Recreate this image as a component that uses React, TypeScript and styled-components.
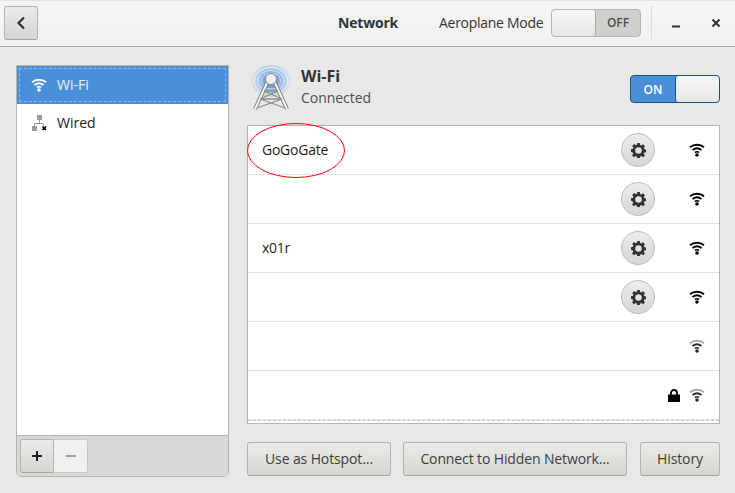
import React from "react";
import styled, { createGlobalStyle } from "styled-components";

const Global = createGlobalStyle`
  html, body { margin: 0; padding: 0; background: #e8e8e7; }
  body { font-family: "Open Sans", "Noto Sans", sans-serif; font-size: 14px; color: #2e3436; }
  * { box-sizing: border-box; }
`;

const Win = styled.div`
  width: 735px; height: 493px; display: flex; flex-direction: column; background: #e8e8e7; overflow: hidden;
`;
const Header = styled.header`
  height: 47px; display: flex; align-items: center; padding: 0 0 0 4px;
  background: linear-gradient(#f5f5f5, #f1f1f1); border-top: 1px solid #e4e4e4; border-bottom: 1px solid #a5a6a0;
`;
const BtnBase = styled.button`
  font-family: inherit; color: #2e3436; border: 1px solid #b4b5b0; border-bottom-color: #a2a39e;
  background: linear-gradient(#ebebe9, #d5d5d2); border-radius: 3px; padding: 0;
  display: flex; align-items: center; justify-content: center;
`;
const BackBtn = styled(BtnBase)` width: 34px; height: 34px; margin-top: -1px; `;
const Title = styled.div`
  font-weight: 700; font-size: 14px; letter-spacing: -0.2px; color: #2e3436; margin-left: 300px; width: 60px; text-align: left; padding-bottom: 2px;
`;
const PlaneLabel = styled.div` margin-left: 41px; width: 112px; font-size: 14px; letter-spacing: -.28px; white-space: nowrap; padding-bottom: 2px; `;
const Switch = styled.div<{ $on?: boolean }>`
  width: 90px; height: 28px; display: flex; border-radius: 4px; overflow: hidden; flex-shrink: 0;
  flex-direction: ${p => (p.$on ? "row" : "row-reverse")};
  border: 1px solid ${p => (p.$on ? "#1c4f86" : "#b6b6b2")};
  background: ${p => (p.$on ? "#4a90d9" : "#cfcfcc")};
`;
const PlaneSwitch = styled.div` margin-top: -2px; `;
const SwitchText = styled.div<{ $on?: boolean }>`
  width: 44px; display: flex; align-items: center; justify-content: center; font-size: 12px; font-weight: 600;
  color: ${p => (p.$on ? "#fff" : "#4c4f50")};
`;
const Knob = styled.div<{ $on?: boolean }>`
  flex: 1; background: linear-gradient(#f6f6f5, #e6e6e4); border-radius: 3px;
  border-${p => (p.$on ? "left" : "right")}: 1px solid ${p => (p.$on ? "#1c4f86" : "#a9a9a5")};
`;
const Sep = styled.div` width: 1px; height: 34px; background: #dcdcda; margin: -2px 0 0 10px; `;
const WinBtn = styled.div<{ $w: number }>`
  width: ${p => p.$w}px; display: flex; justify-content: center; align-items: center; height: 30px; margin-top: -2px;
`;

const Body = styled.main`
  flex: 1; display: flex; gap: 18px; padding: 18px 15px 16px 16px; min-height: 0;
`;
const Side = styled.aside`
  width: 213px; display: flex; flex-direction: column; border: 1px solid #b4b5b0; border-radius: 0 0 5px 5px; background: #fff;
  overflow: hidden;
`;
const SideList = styled.div` flex: 1; `;
const SideRow = styled.div<{ $sel?: boolean }>`
  height: 38px; display: flex; align-items: center; gap: 9px; padding: 0 0 1px 14px; font-size: 14px; position: relative;
  background: ${p => (p.$sel ? "#4a90d9" : "#fff")}; color: ${p => (p.$sel ? "#e8f1fb" : "#1c1f20")};
  ${p => p.$sel && `&::after { content: ""; position: absolute; inset: 2px; border: 1px dashed #8cb9e8; }`}
`;
const SideIcon = styled.span` width: 17px; height: 16px; display: flex; `;
const SideFooter = styled.div`
  height: 41px; background: #d8d8d6; border-top: 1px solid #b4b5b0; padding: 3px; display: flex;
`;
const AddBtn = styled(BtnBase)`
  width: 34px; height: 34px; border-radius: 3px 0 0 3px; font-size: 0;
`;
const RemoveBtn = styled(AddBtn)`
  border-left: none; border-radius: 0 3px 3px 0; background: #f0f0ef; border-color: #c6c6c3;
`;

const Main = styled.section` width: 473px; display: flex; flex-direction: column; `;
const Head = styled.div` height: 60px; display: flex; align-items: flex-start; padding-left: 3px; `;
const HeadText = styled.div` margin-left: 9px; display: flex; flex-direction: column; `;
const HeadTitle = styled.div` font-weight: 700; font-size: 16px; line-height: 22px; color: #2e3436; `;
const HeadSub = styled.div` font-size: 14px; line-height: 22px; color: #4a4f50; letter-spacing: -.03px; `;
const HeadSwitch = styled.div` margin-left: auto; margin-top: 10px; `;
const ListWrap = styled.div`
  position: relative; height: 299px; border: 1px solid #b4b5b0; background: #fff; overflow: hidden;
`;
const Row = styled.div`
  height: 49px; display: flex; align-items: center; border-bottom: 1px solid #e2e2e0; padding-left: 14px; font-size: 14px; color: #1c1f20;
`;
const RowName = styled.div` flex: 1; letter-spacing: -.25px; padding-bottom: 2px; `;
const GearBtn = styled.div`
  width: 34px; height: 34px; border-radius: 50%; border: 1px solid #bdbdb9; background: linear-gradient(#ececea, #d6d6d3);
  display: flex; align-items: center; justify-content: center; margin-right: 34px;
`;
const Lock = styled.div` margin-right: 9px; display: flex; `;
const Signal = styled.div` width: 16px; margin-right: 14px; display: flex; margin-top: -1px; `;
const Dashes = styled.div` position: absolute; left: 0; right: 0; bottom: 2px; height: 0; border-bottom: 1px dashed #c4c4c1; `;
const Foot = styled.div` display: flex; margin-top: 18px; `;
const FootBtn = styled(BtnBase)<{ $w: number; $ml?: number }>`
  width: ${p => p.$w}px; height: 34px; margin-left: ${p => p.$ml ?? 0}px; font-size: 14px; letter-spacing: -.12px; color: #3b3f40; padding-bottom: 2px;
`;
const Ellipse = styled.svg` position: absolute; left: 247px; top: 123px; `;

const Wifi = ({ c = "#000", weak = false }: { c?: string; weak?: boolean }) => (
  <svg width="16" height="16" viewBox="0 0 16 16" fill="none">
    <path d="M1 5.2C5 1.9 11 1.9 15 5.2" stroke={weak ? "#aaa" : c} strokeWidth="1.8" />
    <path d="M3.5 8C6.2 5.9 9.8 5.9 12.5 8" stroke={c} strokeWidth="1.8" />
    <path d="M5.8 10.4C7.2 9.5 8.8 9.5 10.2 10.4" stroke={c} strokeWidth="1.6" />
    <circle cx="8" cy="13" r="1.8" fill={c} />
  </svg>
);
const Gear = () => (
  <svg width="15" height="15" viewBox="0 0 16 16">
    <path fill="#2e3436" fillRule="evenodd" d="M6.6 0h2.8l.4 2.2 1.3.5 1.8-1.3 2 2-1.3 1.8.5 1.3 2.200.4v2.800l-2.200.4-.5 1.300 1.300 1.800-2 2-1.800-1.300-1.300.5-.4 2.200H6.600l-.4-2.200-1.300-.5-1.800 1.300-2-2 1.300-1.800-.5-1.300L-.1 9.400V6.600l2.200-.4.5-1.300-1.300-1.800 2-2 1.800 1.300 1.300-.5zM8 4.500a3.500 3.500 0 1 0 0 7 3.500 3.500 0 0 0 0-7z" />
  </svg>
);

const names = ["GoGoGate", "", "x01r", "", "", ""];

export default function App() {
  return (
    <Win>
      <Global />
      <Header>
        <BackBtn aria-label="Back">
          <svg width="16" height="16" viewBox="0 0 16 16" fill="none"><path d="M11 2.500 5.500 8l5.500 5.500" stroke="#2e3436" strokeWidth="2.200" /></svg>
        </BackBtn>
        <Title>Network</Title>
        <PlaneLabel>Aeroplane Mode</PlaneLabel>
        <PlaneSwitch>
          <Switch>
            <SwitchText>OFF</SwitchText>
            <Knob />
          </Switch>
        </PlaneSwitch>
        <Sep />
        <WinBtn $w={48}>
          <svg width="10" height="10" viewBox="0 0 10 10"><rect x="1" y="7.500" width="8" height="2" fill="#2e3436" /></svg>
        </WinBtn>
        <WinBtn $w={32}>
          <svg width="10" height="10" viewBox="0 0 10 10" fill="none"><path d="M1.500 1.500l7 7M8.500 1.500l-7 7" stroke="#2e3436" strokeWidth="2" /></svg>
        </WinBtn>
      </Header>
      <Body>
        <Side>
          <SideList>
            <SideRow $sel>
              <SideIcon><Wifi c="#fff" /></SideIcon>
              Wi-Fi
            </SideRow>
            <SideRow>
              <SideIcon>
                <svg width="17" height="16" viewBox="0 0 17 16">
                  <rect x="6" y="0" width="5" height="5" fill="#9a9a9a" />
                  <path d="M8.500 5v3M3.500 11V8.500h9V11" stroke="#9a9a9a" fill="none" />
                  <rect x="1" y="11" width="5" height="5" fill="#9a9a9a" />
                  <path d="M11.500 11.500l3.500 3.500M15 11.500l-3.500 3.500" stroke="#000" strokeWidth="1.700" />
                </svg>
              </SideIcon>
              Wired
            </SideRow>
          </SideList>
          <SideFooter>
            <AddBtn aria-label="Add">
              <svg width="12" height="12" viewBox="0 0 12 12"><path d="M1 6h10M6 1v10" stroke="#1c1f20" strokeWidth="2" /></svg>
            </AddBtn>
            <RemoveBtn aria-label="Remove">
              <svg width="12" height="12" viewBox="0 0 12 12"><path d="M1 6h10" stroke="#a0a2a2" strokeWidth="2" /></svg>
            </RemoveBtn>
          </SideFooter>
        </Side>
        <Main>
          <Head>
            <svg width="42" height="46" viewBox="0 0 42 46" fill="none">
              <defs>
                <radialGradient id="glow" cx="21" cy="16" r="20" gradientUnits="userSpaceOnUse">
                  <stop offset="0.2" stopColor="#5f95d6" />
                  <stop offset="0.6" stopColor="#a8c5e6" />
                  <stop offset="1" stopColor="#dfe6ee" />
                </radialGradient>
              </defs>
              <ellipse cx="21" cy="16" rx="20" ry="16" fill="url(#glow)" />
              <ellipse cx="21" cy="16" rx="17" ry="13.500" stroke="#eef2f6" />
              <ellipse cx="21" cy="16" rx="13" ry="10.500" stroke="#dbe6f2" />
              <ellipse cx="21" cy="16" rx="9.500" ry="8" stroke="#c4d7ed" />
              <path d="M5 44 17 18M37 44 25 18" stroke="#7d7f7c" strokeWidth="4" />
              <path d="M5 44 17 18M37 44 25 18" stroke="#f4f4f3" strokeWidth="2" />
              <path d="M14 26h14M10 34h22M7 43l25-9M35 43 10 34M14 26l18 8M28 26l-18 8" stroke="#8d8f8c" strokeWidth="1.300" />
              <circle cx="21" cy="14" r="5.500" fill="#f0f0ef" stroke="#8d8f8c" />
            </svg>
            <HeadText>
              <HeadTitle>Wi-Fi</HeadTitle>
              <HeadSub>Connected</HeadSub>
            </HeadText>
            <HeadSwitch>
              <Switch $on>
                <SwitchText $on>ON</SwitchText>
                <Knob $on />
              </Switch>
            </HeadSwitch>
          </Head>
          <ListWrap>
            {names.map((n, i) => (
              <Row key={i}>
                <RowName>{n}</RowName>
                {i < 4 && <GearBtn><Gear /></GearBtn>}
                {i === 5 && (
                  <Lock>
                    <svg width="12" height="13" viewBox="0 0 12 13"><path d="M3 6V4a3 3 0 0 1 6 0v2" stroke="#000" strokeWidth="1.800" fill="none" /><rect x="0" y="5.500" width="12" height="7.500" fill="#000" /></svg>
                  </Lock>
                )}
                <Signal><Wifi weak={i >= 4} c={i >= 4 ? "#2a2a2a" : "#000"} /></Signal>
              </Row>
            ))}
            <Dashes />
          </ListWrap>
          <Foot>
            <FootBtn $w={144}>Use as Hotspot…</FootBtn>
            <FootBtn $w={224} $ml={12}>Connect to Hidden Network…</FootBtn>
            <FootBtn $w={80} $ml={13}>History</FootBtn>
          </Foot>
        </Main>
      </Body>
      <Ellipse width="100" height="57" viewBox="0 0 100 57" fill="none">
        <ellipse cx="49" cy="27.500" rx="48.500" ry="27" stroke="#f00" strokeWidth="1" />
      </Ellipse>
    </Win>
  );
}
